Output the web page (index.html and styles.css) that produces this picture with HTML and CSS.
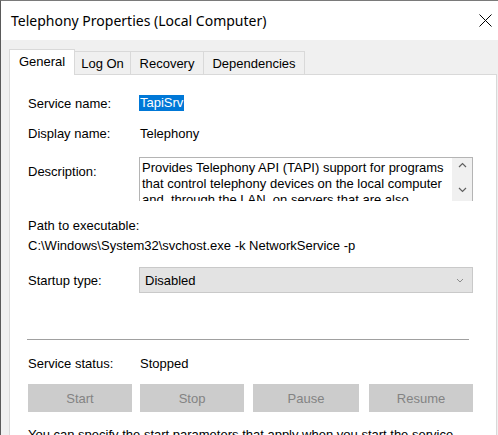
FILE: index.html
```html
<!DOCTYPE html>
<html>
<head>
<meta charset="utf-8">
<link rel="stylesheet" href="styles.css">
</head>
<body>
<div class="window">
  <div class="titlebar">
    <span class="title">Telephony Properties (Local Computer)</span>
    <svg class="close" width="13" height="13" viewBox="0 0 13 13"><path d="M0.5 0.5 L12.5 12.5 M12.5 0.5 L0.5 12.5" stroke="#000" stroke-width="1" fill="none"/></svg>
  </div>
  <div class="client">
    <div class="tabs">
      <div class="tab active t-general">General</div>
      <div class="tab t-logon">Log On</div>
      <div class="tab t-recovery">Recovery</div>
      <div class="tab t-deps">Dependencies</div>
    </div>
    <div class="panel">
      <div class="row r-name"><span class="label">Service name:</span><span class="sel">TapiSrv</span></div>
      <div class="row r-display"><span class="label">Display name:</span><span class="value">Telephony</span></div>
      <div class="row r-desc">
        <span class="label label-desc">Description:</span>
        <div class="desc">
          <div class="desc-text">Provides Telephony API (TAPI) support for programs<br>that control telephony devices on the local computer<br>and, through the LAN, on servers that are also</div>
          <div class="scroll">
            <svg width="9" height="6" viewBox="0 0 9 6"><path d="M1 5 L4.5 1.5 L8 5" stroke="#606060" stroke-width="1.2" fill="none"/></svg>
            <svg width="9" height="6" viewBox="0 0 9 6"><path d="M1 1 L4.5 4.5 L8 1" stroke="#606060" stroke-width="1.2" fill="none"/></svg>
          </div>
        </div>
      </div>
      <div class="row r-path">Path to executable:</div>
      <div class="row r-pathval">C:\Windows\System32\svchost.exe -k NetworkService -p</div>
      <div class="row r-startup">
        <span class="label">Startup type:</span>
        <div class="combo"><span>Disabled</span>
          <svg class="combo-arrow" width="8" height="5" viewBox="0 0 8 5"><path d="M1 1 L4 4 L7 1" stroke="#8c8c8c" stroke-width="1" fill="none"/></svg>
        </div>
      </div>
      <div class="separator"></div>
      <div class="row r-status"><span class="label">Service status:</span><span class="value">Stopped</span></div>
      <div class="buttons">
        <div class="btn b-start">Start</div>
        <div class="btn b-stop">Stop</div>
        <div class="btn b-pause">Pause</div>
        <div class="btn b-resume">Resume</div>
      </div>
      <div class="note">You can specify the start parameters that apply when you start the service</div>
    </div>
  </div>
</div>
</body>
</html>
```
FILE: styles.css
```css
html, body {
  margin: 0;
  padding: 0;
  height: 100%;
  overflow: hidden;
}
body {
  font-family: "Liberation Sans", Arial, sans-serif;
  font-size: 13px;
  color: #000;
  background: #f0f0f0;
}
.window {
  width: 498px;
  height: 435px;
  box-sizing: border-box;
  border-top: 1px solid #7a7a7a;
  border-left: 1px solid #5a5a5a;
  background: #f0f0f0;
  display: flex;
  flex-direction: column;
  overflow: hidden;
}
.titlebar {
  height: 39px;
  flex: none;
  background: #fff;
  display: flex;
  align-items: center;
  padding: 0 6px 0 10px;
}
.title {
  font-family: "Noto Sans", "Open Sans", sans-serif;
  font-size: 14px;
  color: #000;
}
.close {
  margin-left: auto;
  display: block;
}
.client {
  flex: 1;
  padding: 9px 1px 0 8px;
  display: flex;
  flex-direction: column;
  min-height: 0;
}
.tabs {
  display: flex;
  align-items: flex-end;
  height: 25px;
  flex: none;
  position: relative;
  z-index: 1;
}
.tab {
  height: 23px;
  box-sizing: border-box;
  border: 1px solid #d9d9d9;
  border-bottom: none;
  background: #f0f0f0;
  padding: 0;
  display: flex;
  align-items: center;
  justify-content: center;
  margin-left: -1px;
  flex: none;
}
.tab.active {
  height: 26px;
  background: #fff;
  margin-bottom: -1px;
  margin-left: 0;
  padding-bottom: 2px;
  position: relative;
  z-index: 2;
}
.t-general { width: 66px; }
.t-logon { width: 57px; }
.t-recovery { width: 74px; }
.t-deps { width: 102px; }
.panel {
  flex: 1;
  background: #fff;
  border: 1px solid #d9d9d9;
  border-bottom: none;
  padding: 0 0 0 18px;
  min-height: 0;
}
.row {
  display: flex;
  align-items: center;
  height: 16px;
  white-space: nowrap;
}
.label {
  width: 111px;
  flex: none;
}
.value {
  padding-left: 1px;
}
.sel {
  background: #0078d7;
  color: #fff;
  padding: 0 1px;
  height: 16px;
  line-height: 16px;
}
.r-name { margin-top: 20px; }
.r-display { margin-top: 14px; }
.r-desc {
  margin-top: 16px;
  height: 44px;
  align-items: flex-start;
}
.label-desc {
  margin-top: 7px;
  line-height: 16px;
}
.desc {
  width: 334px;
  height: 44px;
  box-sizing: border-box;
  border: 1px solid #b4b4b4;
  border-bottom: none;
  display: flex;
  overflow: hidden;
}
.desc-text {
  flex: 1;
  padding: 2px 0 0 2px;
  line-height: 16px;
  overflow: hidden;
  white-space: nowrap;
}
.scroll {
  width: 20px;
  flex: none;
  background: #f0f0f0;
  display: flex;
  flex-direction: column;
  align-items: center;
  gap: 19px;
  padding-top: 4px;
}
.scroll svg { display: block; }
.r-path { margin-top: 16px; }
.r-pathval { margin-top: 4px; }
.r-startup {
  margin-top: 14px;
  height: 26px;
}
.combo {
  width: 334px;
  height: 26px;
  box-sizing: border-box;
  border: 1px solid #c9c9c9;
  background: #e3e3e3;
  display: flex;
  align-items: center;
  padding: 0 8px 0 5px;
}
.combo-arrow {
  margin-left: auto;
  display: block;
}
.separator {
  margin-top: 46px;
  margin-left: -1px;
  width: 442px;
  height: 1px;
  background: #a0a0a0;
}
.r-status { margin-top: 15px; }
.buttons {
  display: flex;
  margin-top: 13px;
  height: 28px;
}
.btn {
  height: 28px;
  box-sizing: border-box;
  background: #cccccc;
  color: #838383;
  display: flex;
  align-items: center;
  justify-content: center;
}
.b-start { width: 104px; }
.b-stop { width: 104px; margin-left: 8px; }
.b-pause { width: 106px; margin-left: 9px; }
.b-resume { width: 104px; margin-left: 10px; }
.note {
  margin-top: 15px;
  line-height: 16px;
  white-space: nowrap;
}
```
